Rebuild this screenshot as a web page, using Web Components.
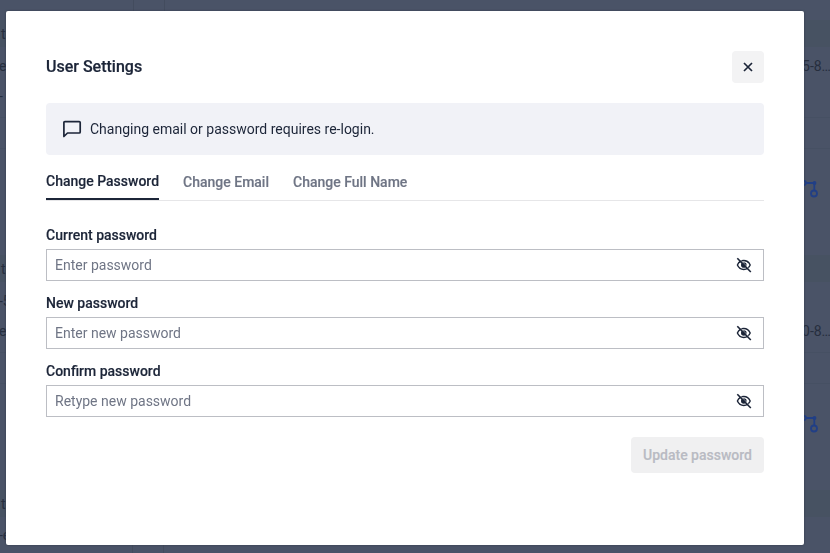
<!DOCTYPE html>
<html>
<head>
<meta charset="utf-8">
<title>User Settings</title>
<style>
html, body { margin: 0; height: 100%; background: #4a5367; overflow: hidden; }
body { font-family: Roboto, "Liberation Sans", sans-serif; }
</style>
</head>
<body>
<bg-table></bg-table>
<settings-modal></settings-modal>

<script>
const ICONS = {
    close: '<svg width="16" height="16" viewBox="0 0 16 16" fill="none" stroke="currentColor" stroke-width="1.7"><path d="M4 4l8 8M12 4l-8 8"/></svg>',
    chat: '<svg width="20" height="20" viewBox="0 0 20 20" fill="none" stroke="currentColor" stroke-width="1.7" stroke-linejoin="round"><path d="M1.900 17.500V3.600q0-1 1-1h14.300q1 0 1 1v9.400q0 1-1 1H5.500z"/></svg>',
    eyeOff: '<svg width="16" height="16" viewBox="0 0 16 16" fill="none" stroke="currentColor" stroke-width="1.400"><path d="M1.400 8C2.700 5.100 5 3.500 7.800 3.500S12.900 5.100 14.200 8C12.900 10.900 10.600 12.500 7.800 12.500S2.700 10.900 1.400 8z"/><circle cx="7.800" cy="8" r="2.800" fill="currentColor" stroke="none"/><path d="M2.600 1l12.800 13.200" stroke="#fff" stroke-width=".6"/><path d="M1.300 1.200l13.500 13.800" stroke-width="1.600"/></svg>',
    branch: '<svg width="20" height="20" viewBox="0 0 20 20" fill="none" stroke="#213f86" stroke-width="1.800" overflow="visible"><circle cx="7" cy="4" r="2"/><circle cx="17.500" cy="4" r="1"/><circle cx="17" cy="14.500" r="3"/><path d="M9 4h7.500M17.300 5v6.500"/></svg>'
};

class BgTable extends HTMLElement {
    constructor() {
        super();
        this.attachShadow({ mode: 'open' });
        const cols = (text = '') => `<div class="cols"><span class="c1">${text}</span><span class="c2"></span><span class="c3"></span></div>`;
        const group = (a, b, num, numRow) => `
            <div class="head"><span class="t">t</span></div>
            <div class="row r1"><span>${a}</span><span class="num">${numRow == 1 ? num : ''}</span></div>
            <div class="row r2 line"><span>${b}</span><span class="num">${numRow == 2 ? num : ''}</span></div>
            <div class="row r3 line"></div>
            <div class="row r4"><span></span><span class="branch">${ICONS.branch}</span></div>
        `;
        this.shadowRoot.innerHTML = `
            <style>
                :host { display: block; height: 100vh; font: 14px/20px Roboto, sans-serif; color: #262e3e; overflow: hidden; }
                .cols { display: flex; height: 20px; }
                .c1 { width: 134px; border-right: 1px solid #434c5e; box-sizing: border-box; }
                .c2 { width: 31px; border-right: 1px solid #434c5e; box-sizing: border-box; }
                .head { height: 27px; background: #475262; display: flex; align-items: center; }
                .t { margin-left: 1px; }
                .row { display: flex; justify-content: space-between; box-sizing: border-box; }
                .row span:first-child { margin-left: -1px; }
                .r1 { height: 38px; align-items: center; }
                .r2 { height: 33px; padding-top: 1px; }
                .r3 { height: 31px; }
                .r4 { height: 106px; }
                .line { border-bottom: 1px solid #465063; }
                .num { margin-right: -1px; white-space: nowrap; }
                .branch { margin: 30px 13px 0 0; }
                .branch svg { display: block; }
                .last { height: 36px; padding-top: 8px; box-sizing: border-box; margin-left: -1px; }
                .last .cols { height: 28px; }
            </style>
            ${cols()}
            ${group('es', '-', '5-8…', 1)}
            ${group('-5', 'e', '0-8…', 2)}
            <div class="head"><span class="t">t</span></div>
            <div class="last">${cols('-e')}</div>
        `;
    }
}
customElements.define('bg-table', BgTable);

class SettingsTabs extends HTMLElement {
    constructor() {
        super();
        this.attachShadow({ mode: 'open' });
        const items = ['Change Password', 'Change Email', 'Change Full Name'];
        this.shadowRoot.innerHTML = `
            <style>
                :host { display: flex; gap: 24px; border-bottom: 1px solid #e6e6e8; height: 35px; margin-top: 10px; }
                div { font-size: 14px; font-weight: 500; line-height: 35px; height: 35px; box-sizing: border-box; color: #6f7585; -webkit-text-stroke: .15px currentColor; }
                .on { color: #1c2538; border-bottom: 2px solid #1c2538; line-height: 33px; }
            </style>
            ${items.map((t, i) => `<div class="${i == 0 ? 'on' : ''}">${t}</div>`).join('')}
        `;
    }
}
customElements.define('settings-tabs', SettingsTabs);

class PasswordField extends HTMLElement {
    constructor() {
        super();
        this.attachShadow({ mode: 'open' });
        this.shadowRoot.innerHTML = `
            <style>
                :host { display: block; }
                label { display: block; font-size: 14px; font-weight: 500; line-height: 20px; color: #1c2538; margin-bottom: 4px; -webkit-text-stroke: .15px currentColor; }
                .box { display: flex; align-items: center; justify-content: space-between; height: 32px; box-sizing: border-box; border: 1px solid #bcbec4; padding: 0 11px 0 8px; font-size: 14px; color: #6f7585; }
                svg { display: block; color: #1c2538; }
            </style>
            <label>${this.getAttribute('label')}</label>
            <div class="box"><span>${this.getAttribute('placeholder')}</span>${ICONS.eyeOff}</div>
        `;
    }
}
customElements.define('password-field', PasswordField);

class SettingsModal extends HTMLElement {
    constructor() {
        super();
        this.attachShadow({ mode: 'open' });
        this.shadowRoot.innerHTML = `
            <style>
                :host { position: fixed; left: 6px; top: 11px; width: 798px; height: 534px; box-sizing: border-box; padding: 40px; background: #fff; border-radius: 2px; box-shadow: 0 0 2px #2e3545; color: #1c2538; }
                header { display: flex; justify-content: space-between; align-items: center; height: 32px; }
                h2 { margin: 0 0 1px; font-size: 16px; font-weight: 500; color: #1c2538; -webkit-text-stroke: .2px currentColor; }
                .close { width: 32px; height: 32px; display: grid; place-items: center; background: #f3f3f4; border-radius: 4px; }
                .note { display: flex; align-items: center; gap: 8px; height: 52px; margin-top: 20px; padding: 0 16px; background: #f1f2f7; border-radius: 4px; font-size: 14px; }
                .fields { display: flex; flex-direction: column; gap: 12px; margin-top: 24px; }
                .actions { display: flex; justify-content: flex-end; margin-top: 20px; }
                .btn { width: 133px; height: 36px; display: grid; place-items: center; background: #f0f0f1; border-radius: 4px; color: #b9bbc3; font-size: 14px; font-weight: 500; -webkit-text-stroke: .15px currentColor; }
                svg { display: block; }
            </style>
            <header><h2>User Settings</h2><div class="close">${ICONS.close}</div></header>
            <div class="note">${ICONS.chat}<span>Changing email or password requires re-login.</span></div>
            <settings-tabs></settings-tabs>
            <div class="fields">
                <password-field label="Current password" placeholder="Enter password"></password-field>
                <password-field label="New password" placeholder="Enter new password"></password-field>
                <password-field label="Confirm password" placeholder="Retype new password"></password-field>
            </div>
            <div class="actions"><div class="btn">Update password</div></div>
        `;
    }
}
customElements.define('settings-modal', SettingsModal);
</script>
</body>
</html>
